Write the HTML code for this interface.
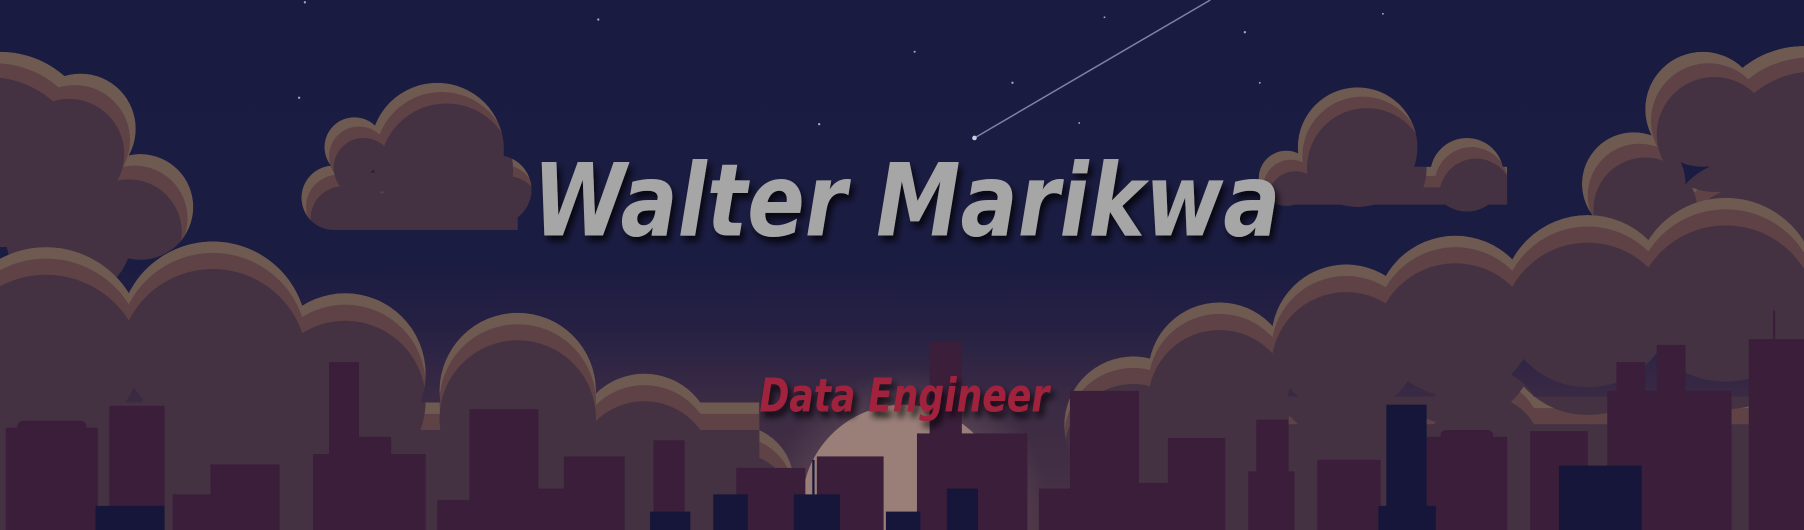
<!DOCTYPE html>
<html><head><meta charset="utf-8"><style>
html,body{margin:0;padding:0;background:#191b40;overflow:hidden;width:1804px;height:530px}
svg{display:block}
</style></head><body>
<svg width="1804" height="530" viewBox="0 0 1568 461" preserveAspectRatio="none" xmlns="http://www.w3.org/2000/svg">
<defs>
<linearGradient id="sky" x1="0" y1="0" x2="0" y2="1">
<stop offset="0" stop-color="#191b40"/>
<stop offset="0.5" stop-color="#1b1c42"/>
<stop offset="0.62" stop-color="#262143"/>
<stop offset="0.75" stop-color="#3a2a44"/>
<stop offset="1" stop-color="#4a3344"/>
</linearGradient>
<radialGradient id="glow" cx="0.5" cy="0.5" r="0.5">
<stop offset="0.6" stop-color="#6b5560" stop-opacity="0.6"/>
<stop offset="1" stop-color="#6b5560" stop-opacity="0"/>
</radialGradient>
<filter id="sh" x="-10%" y="-30%" width="120%" height="160%"><feDropShadow dx="3" dy="5" stdDeviation="3" flood-color="#000" flood-opacity="0.75"/></filter>
<g id="cL"><circle cx="0" cy="130" r="85"/><circle cx="70" cy="112" r="48"/><circle cx="122" cy="180" r="46"/><circle cx="60" cy="205" r="55"/></g>
<g id="cA"><circle cx="380" cy="130" r="58"/><circle cx="308" cy="128" r="26"/><circle cx="290" cy="172" r="28"/><circle cx="432" cy="165" r="30"/><rect x="290" y="150" width="160" height="50"/></g>
<g id="cB"><circle cx="1180" cy="128" r="52"/><circle cx="1118" cy="155" r="24"/><circle cx="1275" cy="152" r="32"/><rect x="1110" y="145" width="200" height="33"/></g>
<g id="cR"><circle cx="1568" cy="125" r="85"/><circle cx="1480" cy="95" r="50"/><circle cx="1420" cy="160" r="45"/><circle cx="1510" cy="200" r="60"/><circle cx="1440" cy="215" r="40"/></g>
<g id="lowL"><circle cx="40" cy="300" r="85"/><circle cx="185" cy="292" r="82"/><circle cx="300" cy="325" r="70"/><circle cx="450" cy="340" r="68"/><circle cx="560" cy="385" r="60"/><circle cx="640" cy="420" r="50"/><circle cx="330" cy="400" r="60"/><circle cx="160" cy="390" r="55"/><rect x="0" y="350" width="660" height="111"/></g>
<g id="lowR"><circle cx="1060" cy="325" r="62"/><circle cx="1170" cy="295" r="65"/><circle cx="1265" cy="275" r="70"/><circle cx="1380" cy="262" r="75"/><circle cx="1500" cy="252" r="80"/><circle cx="1568" cy="280" r="60"/><circle cx="985" cy="370" r="60"/><circle cx="1290" cy="370" r="50"/><rect x="930" y="345" width="638" height="116"/></g>
<mask id="kL" maskUnits="userSpaceOnUse" x="0" y="0" width="1568" height="461"><use href="#cL" fill="#fff"/></mask>
<mask id="kA" maskUnits="userSpaceOnUse" x="0" y="0" width="1568" height="461"><use href="#cA" fill="#fff"/></mask>
<mask id="kB" maskUnits="userSpaceOnUse" x="0" y="0" width="1568" height="461"><use href="#cB" fill="#fff"/></mask>
<mask id="kR" maskUnits="userSpaceOnUse" x="0" y="0" width="1568" height="461"><use href="#cR" fill="#fff"/></mask>
<mask id="kLL" maskUnits="userSpaceOnUse" x="0" y="0" width="1568" height="461"><use href="#lowL" fill="#fff"/></mask>
<mask id="kLR" maskUnits="userSpaceOnUse" x="0" y="0" width="1568" height="461"><use href="#lowR" fill="#fff"/></mask>
</defs>
<rect width="1568" height="461" fill="url(#sky)"/>
<g fill="#aab">
<circle cx="265" cy="2" r="1"/><circle cx="520" cy="17" r="1"/><circle cx="795" cy="45" r="0.9"/><circle cx="880" cy="72" r="1"/><circle cx="960" cy="15" r="0.8"/><circle cx="1082" cy="28" r="1"/><circle cx="1095" cy="72" r="0.8"/><circle cx="1202" cy="12" r="0.8"/><circle cx="260" cy="85" r="1"/><circle cx="712" cy="108" r="1"/><circle cx="938" cy="107" r="0.8"/>
</g>
<line x1="1052" y1="0" x2="847" y2="120" stroke="#9a9ab8" stroke-width="1.3" opacity="0.8"/>
<circle cx="847" cy="120" r="2" fill="#ccd"/>
<circle cx="790" cy="440" r="120" fill="url(#glow)"/>
<circle cx="785" cy="440" r="88" fill="#9a7f78"/>
<g mask="url(#kL)"><use href="#cL" fill="#6e5a50"/><use href="#cL" fill="#5f4245" transform="translate(-5,10)"/><use href="#cL" fill="#443242" transform="translate(-10,22)"/></g>
<g mask="url(#kA)"><use href="#cA" fill="#6e5a50"/><use href="#cA" fill="#5f4245" transform="translate(4,8)"/><use href="#cA" fill="#443242" transform="translate(8,18)"/></g>
<g mask="url(#kB)"><use href="#cB" fill="#6e5a50"/><use href="#cB" fill="#5f4245" transform="translate(4,8)"/><use href="#cB" fill="#443242" transform="translate(8,18)"/></g>
<g mask="url(#kR)"><use href="#cR" fill="#6e5a50"/><use href="#cR" fill="#5f4245" transform="translate(5,10)"/><use href="#cR" fill="#443242" transform="translate(10,22)"/></g>
<g mask="url(#kLL)"><use href="#lowL" fill="#6e5a50"/><use href="#lowL" fill="#5f4245" transform="translate(0,10)"/><use href="#lowL" fill="#443242" transform="translate(0,24)"/></g>
<g mask="url(#kLR)"><use href="#lowR" fill="#6e5a50"/><use href="#lowR" fill="#5f4245" transform="translate(0,10)"/><use href="#lowR" fill="#443242" transform="translate(0,24)"/></g>
<g fill="#3a1e3a">
<rect x="5" y="372" width="80" height="89"/><rect x="15" y="366" width="60" height="10" rx="5"/>
<rect x="95" y="353" width="48" height="108"/>
<rect x="183" y="404" width="60" height="57"/><rect x="150" y="430" width="40" height="31"/>
<rect x="286" y="315" width="26" height="146"/><rect x="272" y="395" width="98" height="66"/><rect x="310" y="380" width="30" height="81"/>
<rect x="408" y="356" width="60" height="105"/><rect x="380" y="435" width="40" height="26"/>
<rect x="490" y="397" width="53" height="64"/><rect x="468" y="425" width="30" height="36"/>
<rect x="568" y="383" width="27" height="78"/>
<rect x="640" y="407" width="60" height="54"/>
<rect x="710" y="397" width="58" height="64"/>
<rect x="808" y="297" width="28" height="164"/><rect x="797" y="377" width="96" height="84"/>
<rect x="930" y="340" width="60" height="121"/><rect x="903" y="425" width="40" height="36"/>
<rect x="1015" y="381" width="50" height="80"/><rect x="990" y="420" width="30" height="41"/>
<rect x="1092" y="365" width="28" height="96"/><rect x="1085" y="410" width="40" height="51"/>
<rect x="1145" y="400" width="55" height="61"/>
<rect x="1240" y="380" width="70" height="81"/><rect x="1252" y="374" width="46" height="10" rx="5"/>
<rect x="1330" y="375" width="50" height="86"/>
<rect x="1405" y="315" width="25" height="146"/><rect x="1440" y="300" width="25" height="161"/><rect x="1397" y="340" width="108" height="121"/>
<rect x="1520" y="295" width="48" height="166"/><rect x="1541" y="270" width="2" height="30"/>
</g>
<g fill="#16163a">
<rect x="83" y="440" width="60" height="21"/>
<rect x="565" y="445" width="35" height="16"/>
<rect x="620" y="430" width="30" height="31"/>
<rect x="690" y="430" width="40" height="31"/><rect x="706" y="400" width="2" height="30"/>
<rect x="770" y="445" width="30" height="16"/>
<rect x="823" y="425" width="27" height="36"/>
<rect x="1205" y="352" width="35" height="109"/><rect x="1198" y="440" width="50" height="21"/>
<rect x="1355" y="405" width="72" height="56"/>
</g>
<text x="788" y="205" text-anchor="middle" font-family="DejaVu Sans, sans-serif" font-weight="bold" font-style="italic" font-size="88" fill="#a6a6a6" filter="url(#sh)" textLength="650" lengthAdjust="spacingAndGlyphs">Walter Marikwa</text>
<text x="786" y="358" text-anchor="middle" font-family="DejaVu Sans, sans-serif" font-weight="bold" font-style="italic" font-size="40" fill="#a0243c" filter="url(#sh)" textLength="252" lengthAdjust="spacingAndGlyphs">Data Engineer</text>
</svg>
</body></html>
